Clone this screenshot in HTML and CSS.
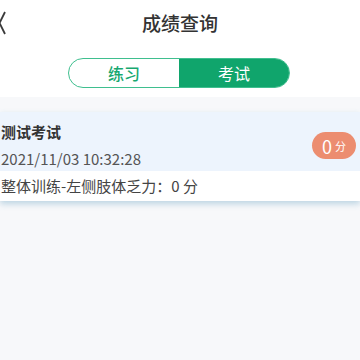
FILE: index.html
```html
<!DOCTYPE html>
<html lang="zh">
<head>
<meta charset="utf-8">
<link rel="stylesheet" href="styles.css">
</head>
<body>
<div class="top">
  <header class="header">
    <div class="back">
      <svg width="8" height="24" viewBox="0 0 8 24"><path d="M5 1 L-0.5 12 L5 23" fill="none" stroke="#3a3a3a" stroke-width="1.8"/></svg>
    </div>
    <h1 class="title">成绩查询</h1>
    <div></div>
  </header>
  <div class="tabs">
    <div class="tab">练习</div>
    <div class="tab active">考试</div>
  </div>
</div>
<main class="list">
  <section class="card">
    <div class="card-head">
      <div class="info">
        <div class="name">测试考试</div>
        <div class="date">2021/11/03 10:32:28</div>
      </div>
      <div class="badge"><span class="num">0</span><span class="unit">分</span></div>
    </div>
    <div class="card-row">整体训练-左侧肢体乏力：0 分</div>
  </section>
</main>
</body>
</html>
```
FILE: styles.css
```css
* { box-sizing: border-box; }
html, body { margin: 0; padding: 0; }
body {
  width: 360px;
  height: 360px;
  overflow: hidden;
  background: #f7f8fa;
  font-family: "Noto Sans CJK SC", "Noto Sans", sans-serif;
  color: #333;
}
.top {
  background: #fff;
  padding-bottom: 9px;
}
.header {
  height: 46px;
  display: grid;
  grid-template-columns: 1fr auto 1fr;
  align-items: center;
}
.back { display: flex; align-items: center; }
.back svg { display: block; }
.title {
  margin: 0;
  font-size: 19px;
  font-weight: 500;
  color: #333;
  line-height: 24px;
}
.tabs {
  margin: 12px 0 0 68px;
  width: 222px;
  height: 30px;
  border: 1.5px solid #3fbf8f;
  border-radius: 15px;
  display: grid;
  grid-template-columns: 1fr 1fr;
  overflow: hidden;
}
.tab {
  display: flex;
  align-items: center;
  justify-content: center;
  font-size: 16px;
  color: #17a870;
  font-weight: 500;
}
.tab.active {
  background: #10a56c;
  color: #fff;
  font-weight: 400;
}
.list { padding-top: 15px; }
.card {
  background: #fff;
  box-shadow: 0 3px 6px rgba(120, 170, 200, 0.45);
}
.card-head {
  background: #edf4fd;
  height: 59px;
  display: flex;
  justify-content: space-between;
  padding: 10px 4px 0 1px;
}
.name {
  font-size: 15px;
  font-weight: 700;
  line-height: 20px;
  color: #333;
}
.date {
  margin-top: 7px;
  font-size: 15px;
  line-height: 20px;
  color: #555;
}
.badge {
  margin-top: 10px;
  width: 44px;
  height: 27px;
  border-radius: 14px;
  background: #ec8d70;
  color: #fff;
  display: flex;
  align-items: center;
  justify-content: center;
  gap: 3px;
}
.num { font-size: 18px; line-height: 1; }
.unit { font-size: 11px; line-height: 1; margin-top: 2px; }
.card-row {
  height: 30px;
  line-height: 30px;
  padding-left: 1px;
  font-size: 15px;
  color: #444;
}
```
